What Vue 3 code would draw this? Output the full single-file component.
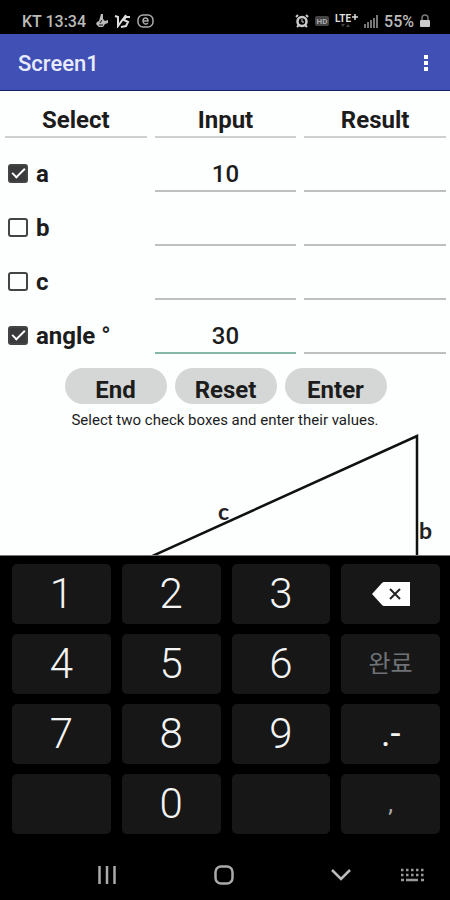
<template>
  <div class="screen">
    <div class="status-bar">
      <div class="status-group">
        <span>KT 13:34</span>
        <svg class="icon-touch" width="12" height="14" viewBox="0 0 12 14" fill="#bbb">
          <path d="M5 0h2v5l2 2 3-1v3l-3 1-2 3H3l-3-3 1-2 2-1z" />
          <path d="M4 9l2-3M3 11h4" stroke="#111" fill="none" />
        </svg>
        <svg width="17" height="14" viewBox="0 0 17 14" fill="none" stroke="#ddd" stroke-width="2">
          <path d="M1 2l3 1v9L12 1M16 3h-4l-2 3 4 2-2 4-5 1" />
        </svg>
        <svg width="17" height="14" viewBox="0 0 17 14" fill="none" stroke="#aaa" stroke-width="1.5">
          <rect x="1" y="1" width="15" height="12" rx="5" />
          <path d="M6 7h5c0-4-5-4-5 0 0 3 3 4 5 2" />
        </svg>
      </div>
      <div class="status-group status-right">
        <svg width="14" height="14" viewBox="0 0 14 14" fill="none" stroke="#ccc">
          <circle cx="7" cy="7.5" r="4.5" stroke-width="2.5" />
          <path d="M1 3l2-2M13 3l-2-2M2 13l2-2M12 13l-2-2" stroke-width="2" />
          <path d="M7 5v3h2" />
        </svg>
        <svg width="14" height="14" viewBox="0 0 14 14">
          <rect y="2" width="14" height="10" rx="2" fill="#444" />
          <text x="7" y="10" class="hd">HD</text>
        </svg>
        <svg width="23" height="14" viewBox="0 0 23 14">
          <text x="0" y="8" class="lte">LTE</text>
          <path d="M20 0v6M17 3h6" stroke="#ddd" stroke-width="1.5" />
          <path d="M6 10l2 3 2-3M11 13l2-3 2 3" fill="#444" />
        </svg>
        <svg class="icon-signal" width="14" height="14" viewBox="0 0 14 14" fill="#777">
          <path d="M0 10h2v4H0zM3 8h2v6H3zM6 6h2v8H6zM9 4h2v10H9zM12 1h2v13h-2z" />
        </svg>
        <span>55%</span>
        <svg width="10" height="14" viewBox="0 0 10 14">
          <path d="M2 7V4c0-4 6-4 6 0v3" fill="none" stroke="#777" stroke-width="1.5" />
          <rect y="6" width="10" height="7" rx="1" fill="#ccc" />
        </svg>
      </div>
    </div>

    <header class="app-bar">
      <h1>Screen1</h1>
      <button class="menu" aria-label="More options">
        <i></i><i></i><i></i>
      </button>
    </header>

    <main class="content">
      <table class="fields">
        <thead>
          <tr>
            <th v-for="title in columns" :key="title"><div class="heading">{{ title }}</div></th>
          </tr>
        </thead>
        <tbody>
          <tr v-for="row in rows" :key="row.id">
            <td>
              <label class="check">
                <input v-model="row.checked" type="checkbox" />
                <span>{{ row.label }}</span>
              </label>
            </td>
            <td>
              <input
                v-model="row.value"
                class="field"
                :class="{ active: row.id === activeId }"
                type="text"
                inputmode="decimal"
                :aria-label="row.label + ' input'"
                @focus="activeId = row.id"
              />
            </td>
            <td>
              <input class="field" type="text" readonly :value="row.result" :aria-label="row.label + ' result'" />
            </td>
          </tr>
        </tbody>
      </table>

      <div class="actions">
        <button>End</button>
        <button @click="reset">Reset</button>
        <button @click="solve">Enter</button>
      </div>
      <p class="hint">Select two check boxes and enter their values.</p>

      <svg class="triangle" viewBox="0 0 450 240">
        <path d="M-24 206L417 6V206Z" />
        <text x="218" y="90">c</text>
        <text x="419" y="109">b</text>
      </svg>
    </main>

    <div class="keypad">
      <button
        v-for="key in keys"
        :key="key.id"
        :class="key.type"
        :aria-label="key.name"
        @click="press(key)"
      >
        <svg v-if="key.id === 'del'" width="38" height="24" viewBox="0 0 38 24">
          <path d="M0 12L10 1Q11 0 12 0H38V24H12Q11 24 10 23Z" fill="#fff" />
          <path d="M18 7l10 10M28 7L18 17" stroke="#222" stroke-width="2" />
        </svg>
        <template v-else>{{ key.text }}</template>
      </button>
    </div>

    <nav class="nav-bar">
      <button aria-label="Recent apps">
        <svg width="18" height="18" viewBox="0 0 18 18" stroke="#aaa" stroke-width="2.5">
          <path d="M1.5 0v18M9 0v18M16.5 0v18" />
        </svg>
      </button>
      <button aria-label="Home">
        <svg width="20" height="20" viewBox="0 0 20 20" fill="none" stroke="#aaa" stroke-width="2.5">
          <rect x="1.5" y="1.5" width="17" height="17" rx="5.5" />
        </svg>
      </button>
      <button aria-label="Hide keyboard">
        <svg width="20" height="12" viewBox="0 0 20 12" fill="none" stroke="#bbb" stroke-width="2.5">
          <path d="M1 1l9 9 9-9" />
        </svg>
      </button>
      <button aria-label="Switch keyboard">
        <svg width="24" height="14" viewBox="0 0 24 14" stroke="#999" stroke-width="2.5" fill="none">
          <path d="M1 2h23M1 7h23" stroke-dasharray="2.5 2.5" />
          <path d="M1 12h3M6 12h12M21 12h3" />
        </svg>
      </button>
    </nav>
  </div>
</template>

<script setup>
import { ref, reactive } from 'vue'

const columns = ['Select', 'Input', 'Result']

const rows = reactive([
  { id: 'a', label: 'a', checked: true, value: '10', result: '' },
  { id: 'b', label: 'b', checked: false, value: '', result: '' },
  { id: 'c', label: 'c', checked: false, value: '', result: '' },
  { id: 'angle', label: 'angle °', checked: true, value: '30', result: '' },
])

const activeId = ref('angle')

const digit = (n) => ({ id: n, text: n, type: 'digit' })

const keys = [
  digit('1'), digit('2'), digit('3'),
  { id: 'del', type: 'delete', name: 'Delete' },
  digit('4'), digit('5'), digit('6'),
  { id: 'done', text: '완료', type: 'done' },
  digit('7'), digit('8'), digit('9'),
  { id: 'sign', text: '.-', type: 'sign' },
  { id: 'blank-left', text: '', type: 'blank' },
  digit('0'),
  { id: 'blank-right', text: '', type: 'blank' },
  { id: 'comma', text: ',', type: 'comma' },
]

function press(key) {
  const row = rows.find((r) => r.id === activeId.value)
  if (key.type === 'digit') row.value += key.text
  if (key.id === 'del') row.value = row.value.slice(0, -1)
}

function reset() {
  rows.forEach((row) => {
    row.checked = false
    row.value = ''
    row.result = ''
  })
}

// a: base, b: height, c: hypotenuse
function solve() {
  const [a, b, c, angle] = rows.map((r) => (r.checked ? Number(r.value) : null))
  if (rows.filter((r) => r.checked).length !== 2) return
  let t
  if (angle !== null) t = (angle * Math.PI) / 180
  else if (a !== null && b !== null) t = Math.atan2(b, a)
  else if (a !== null) t = Math.acos(a / c)
  else t = Math.asin(b / c)
  const hyp = c ?? (a !== null ? a / Math.cos(t) : b / Math.sin(t))
  const results = [hyp * Math.cos(t), hyp * Math.sin(t), hyp, (t * 180) / Math.PI]
  rows.forEach((row, i) => {
    row.result = results[i].toFixed(2)
  })
}
</script>

<style>
body {
  margin: 0;
  background: #000;
}
</style>

<style scoped>
.screen {
  display: flex;
  flex-direction: column;
  height: 100vh;
  background: #000;
  color: #1c1c1c;
  font-family: Roboto, "Noto Sans CJK KR", sans-serif;
}

button {
  display: flex;
  align-items: center;
  justify-content: center;
  padding: 0;
  border: none;
  background: none;
  font-family: inherit;
  cursor: pointer;
}

.status-bar {
  display: flex;
  justify-content: space-between;
  flex: none;
  height: 34px;
  padding: 8px 20px 0 22px;
  box-sizing: border-box;
  color: #bbb;
  font-size: 16px;
  font-weight: 500;
}

.status-group {
  display: flex;
  align-items: center;
  gap: 6px;
}

.icon-touch {
  margin-left: 4px;
}

.hd {
  fill: #aaa;
  font-size: 8px;
  font-weight: 700;
  text-anchor: middle;
}

.lte {
  fill: #ddd;
  font-size: 10px;
  font-weight: 700;
}

.app-bar {
  display: flex;
  align-items: center;
  justify-content: space-between;
  flex: none;
  height: 57px;
  padding: 2px 12px 0 18px;
  box-sizing: border-box;
  border-bottom: 1px solid #16206f;
  background: #4050b5;
}

.app-bar h1 {
  margin: 0;
  color: #e8ebfa;
  font-size: 22px;
  font-weight: 500;
}

.menu {
  flex-direction: column;
  gap: 2px;
  width: 24px;
  height: 40px;
}

.menu i {
  width: 4px;
  height: 4px;
  background: #fff;
}

.content {
  flex: 1;
  min-height: 0;
  overflow: hidden;
  border-bottom: 1px solid #777;
  background: #fdfefe;
}

.fields {
  width: 100%;
  padding-left: 1px;
  table-layout: fixed;
  border-spacing: 0;
}

.fields th,
.fields td {
  height: 54px;
  padding: 0 4px;
  box-sizing: border-box;
  vertical-align: bottom;
}

.fields th {
  height: 47px;
}

.heading,
.field {
  display: block;
  width: 100%;
  height: 38px;
  padding: 4px 0 0;
  box-sizing: border-box;
  border: none;
  border-bottom: 2px solid #ccd0ce;
  border-radius: 0;
  outline: none;
  background: none;
  color: inherit;
  font-family: inherit;
  font-size: 24px;
  font-weight: 700;
  line-height: 32px;
  text-align: center;
}

.field {
  border-bottom-color: #bcc1bf;
  font-weight: 500;
}

.field.active {
  border-bottom-color: #86b8a8;
}

.check {
  display: flex;
  align-items: center;
  gap: 8px;
  height: 38px;
  padding-left: 3px;
  font-size: 24px;
  font-weight: 700;
  line-height: 32px;
}

.check span {
  padding-top: 2px;
}

.check input {
  display: grid;
  place-items: center;
  width: 20px;
  height: 19px;
  margin: 0;
  box-sizing: border-box;
  appearance: none;
  border: 2px solid #444;
  border-radius: 3px;
}

.check input:checked {
  background: #3a3a3c;
}

.check input:checked::before {
  content: "";
  width: 11px;
  height: 5px;
  margin-bottom: 4px;
  border: solid #fff;
  border-width: 0 0 2px 2px;
  transform: rotate(-45deg);
}

.actions {
  display: flex;
  justify-content: center;
  gap: 8px;
  padding: 14px 0 0 1px;
}

.actions button {
  width: 102px;
  height: 36px;
  padding-top: 8px;
  border-radius: 18px;
  background: #d5d7d6;
  color: #1c1c1c;
  font-size: 24px;
  font-weight: 700;
}

.hint {
  margin: 6px 0 0;
  font-size: 15px;
  line-height: 20px;
  text-align: center;
}

.triangle {
  display: block;
  width: 100%;
}

.triangle path {
  fill: none;
  stroke: #111;
  stroke-width: 2.5;
}

.triangle text {
  fill: #222;
  font-family: Lato, sans-serif;
  font-size: 23px;
  font-weight: 700;
}

.keypad {
  display: grid;
  grid-template-columns: repeat(4, 1fr);
  grid-auto-rows: 60px;
  gap: 10px 11px;
  flex: none;
  padding: 8px 10px 0 12px;
}

.keypad button {
  border-radius: 5px;
  background: #171717;
  color: #f4f4f4;
  font-size: 42px;
  font-weight: 300;
  line-height: 60px;
}

.keypad .done {
  color: #6f7276;
  font-size: 24px;
  font-weight: 400;
}

.keypad .sign {
  font-size: 36px;
  font-weight: 400;
}

.keypad .comma {
  color: #aaa;
  font-size: 24px;
  font-weight: 400;
}

.nav-bar {
  display: grid;
  grid-template-columns: repeat(3, 1fr) 24px;
  flex: none;
  height: 66px;
  padding: 0 26px 0 48px;
}

.nav-bar button {
  padding-top: 16px;
}
</style>
